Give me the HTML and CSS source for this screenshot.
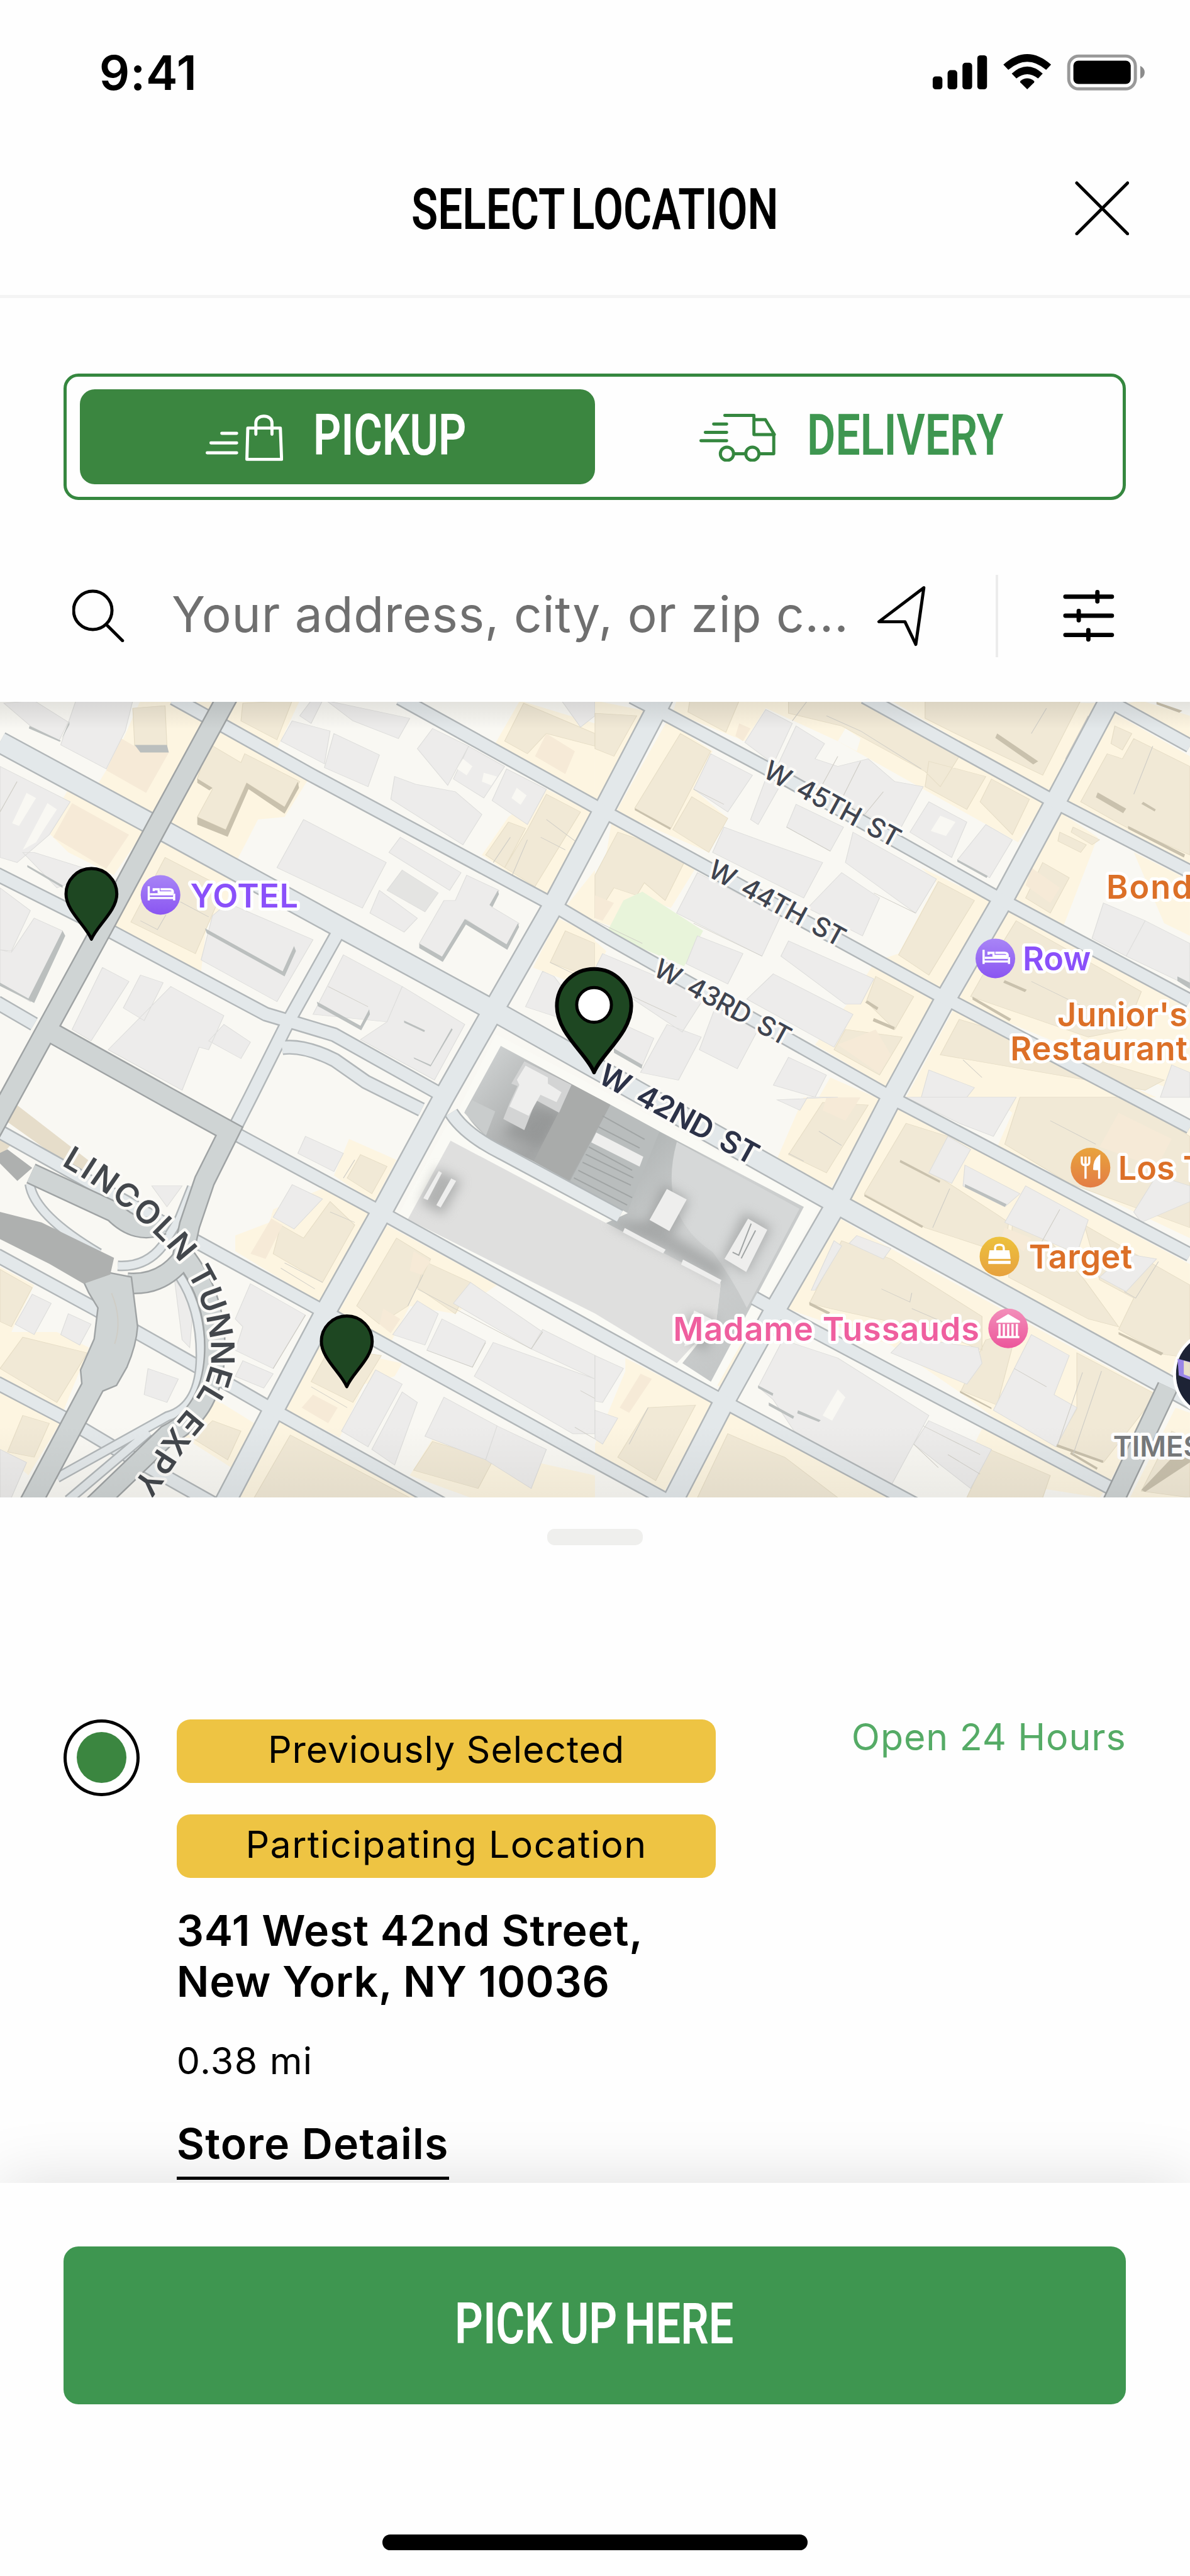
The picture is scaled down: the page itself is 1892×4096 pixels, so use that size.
FILE: index.html
```html
<!DOCTYPE html>
<html lang="en">
<head>
    <meta charset="UTF-8">
    <meta name="viewport" content="width=device-width, initial-scale=1.0">
    <title>Select Location</title>
    <link rel="stylesheet" href="styles.css">
</head>
<body>
    <div class="status-bar">
        <span class="time">9:41</span>
        <svg class="status-icons" viewBox="1500 84 352 68">
            <!-- Signal -->
            <rect x="1505" y="124" width="15.6" height="21" rx="5"/>
            <rect x="1529" y="114" width="15.6" height="31" rx="5"/>
            <rect x="1553" y="102" width="15.6" height="43" rx="5"/>
            <rect x="1577" y="90" width="15.6" height="55" rx="5"/>
            <!-- Wifi -->
            <path d="M1657.5 145l-11-11q-1-1.500 0-2.500 11-8.500 22 0 1 1 0 2.500z"/>
            <path d="M1632.500 119.500q25-23 50 0l-7.500 8q-17.500-14-35 0z"/>
            <path d="M1619 105q38.500-34 77 0l-8 8.500q-30.500-26-61 0z"/>
            <!-- Battery -->
            <rect class="battery-body" x="1724.500" y="91.200" width="107.500" height="53" rx="16"/>
            <rect x="1732" y="98.700" width="92.500" height="37.600" rx="8"/>
            <path class="battery-tip" d="M1840 107q7 3.500 7 10.500t-7 10.500z"/>
        </svg>
    </div>

    <div class="header">
        <svg class="title" viewBox="0 0 588 68"><text class="condensed" x="-2" y="67" textLength="592" lengthAdjust="spacingAndGlyphs">SELECT LOCATION</text></svg>
        <svg class="close" viewBox="0 0 88 88"><path d="M3 3l82 82M85 3L3 85"/></svg>
    </div>

    <div class="toggle">
        <div class="tab active">
            <svg class="tab-icon" viewBox="330 665 126 80">
                <path d="M357 698.500h24M339.500 714h41.500M333.500 730h47.500M399 690h52.500l2 50.500h-56zM412 700v-18c0-15 26-15 26 0v18"/>
            </svg>
            <svg class="tab-label pickup" viewBox="510 666 240 68"><text class="condensed" x="505" y="733.500" textLength="247" lengthAdjust="spacingAndGlyphs">PICKUP</text></svg>
        </div>
        <div class="tab">
            <svg class="tab-icon truck" viewBox="1126 664 126 80">
                <path d="M1169 668.500h47v31h33l-14.500-24h-18.500M1151 682.500h21M1137.500 696h34.500M1130.500 709.500h41.500M1248 698v32.500h-23M1184 730.500h18"/>
                <circle cx="1172.500" cy="730.500" r="10.700"/>
                <circle cx="1213.500" cy="730.500" r="10.700"/>
            </svg>
            <svg class="tab-label delivery" viewBox="1307 666 312 68"><text class="condensed" x="1302" y="733.500" textLength="317" lengthAdjust="spacingAndGlyphs">DELIVERY</text></svg>
        </div>
    </div>

    <div class="search-row">
        <svg class="search-icon" viewBox="117 949 84 86"><circle cx="150" cy="983" r="31"/><path d="M172 1006l26 26"/></svg>
        <span class="placeholder">Your address, city, or zip c...</span>
        <svg class="locate-icon" viewBox="1415 943 82 102"><path d="M1493 948.500l-72.500 55h42l17.500 36.500z"/></svg>
        <span class="separator"></span>
        <svg class="filter-icon" viewBox="1714 948 86 88"><path d="M1719 961h75M1719 991.700h75M1719 1022.700h75M1770.600 953.500v15M1740.500 984v15M1756 1015v15"/></svg>
    </div>

    <svg class="map" viewBox="0 1132 1920 1284">
        <defs>
            <linearGradient id="fadeTop" x1="0" y1="0" x2="0" y2="1">
                <stop offset="0" stop-color="#000" stop-opacity=".09"/>
                <stop offset="1" stop-color="#000" stop-opacity="0"/>
            </linearGradient>
            <linearGradient id="fadeBottom" x1="0" y1="0" x2="0" y2="1">
                <stop offset="0" stop-color="#000" stop-opacity="0"/>
                <stop offset="1" stop-color="#000" stop-opacity=".055"/>
            </linearGradient>
            <linearGradient id="terminal" gradientUnits="userSpaceOnUse" x1="760" y1="1720" x2="1230" y2="2180">
                <stop offset="0" stop-color="#cfd2d2"/>
                <stop offset=".25" stop-color="#a3a5a5"/>
                <stop offset=".45" stop-color="#b4b8b8"/>
                <stop offset=".65" stop-color="#cfd1d1"/>
                <stop offset="1" stop-color="#c3c6c6"/>
            </linearGradient>
            <linearGradient id="purple" x1="0" y1="0" x2="0" y2="1"><stop offset="0" stop-color="#a885f6"/><stop offset="1" stop-color="#8a55f2"/></linearGradient>
            <linearGradient id="orange" x1="0" y1="0" x2="0" y2="1"><stop offset="0" stop-color="#e9a43c"/><stop offset="1" stop-color="#e37c45"/></linearGradient>
            <linearGradient id="gold" x1="0" y1="0" x2="0" y2="1"><stop offset="0" stop-color="#edc23d"/><stop offset="1" stop-color="#e7a13e"/></linearGradient>
            <linearGradient id="pink" x1="0" y1="0" x2="0" y2="1"><stop offset="0" stop-color="#f28fba"/><stop offset="1" stop-color="#ec569b"/></linearGradient>
            <filter id="soft" x="-50%" y="-50%" width="200%" height="200%"><feGaussianBlur stdDeviation="9"/></filter>
            <path id="expyPath" d="M108 1864C186 1908 268 1975 304 2025S354 2122 358 2170S345 2250 308 2294S262 2362 216 2424"/>
            <path id="pin" d="M0 114C-9 92-41 68-41 41A41 41 0 0 1 41 41C41 68 9 92 0 114z"/>
        </defs>
        <rect class="land" x="0" y="1132" width="1920" height="1284"/>

        <!-- North west quarter -->
        <g transform="matrix(.6122 0 0 .4082 0 1130)">
            <path class="zone" d="M370 0H560L535 90L410 455L260 325L310 200zM450 0H545L550 55zM120 510L180 350L380 515L300 690L180 600zM600 0H790L730 190L595 95zM580 125L815 305L750 460L680 470L625 630L445 490zM425 560L610 700L590 860L545 880L530 1070L295 895zM1370 0L1568 90V390L1305 170zM1440 350L1568 440L1440 780L1270 610L1340 460zM1568 670L1485 825L1568 900zM1470 860L1568 930V1150L1405 1055z"/>
            <path class="tan" d="M350 30L435 20L440 180H355zM640 10L770 0L730 155L635 80zM550 170L635 245L645 210L790 320L750 420L650 325L595 510L520 460L560 350L520 310zM435 620L590 740L515 1000L345 875zM1340 480L1385 505L1330 660L1280 610zM1390 510L1440 370L1530 440L1410 735L1330 660zM1490 910L1568 960V1100L1450 1035zM1380 10L1568 130V180L1440 130L1390 210L1330 160z"/>
            <path class="peach" d="M190 405L340 530L280 665L140 540zM445 205L385 365L280 275L320 150L355 180zM1440 130L1515 200L1490 290L1410 220z"/>
            <path class="bldg" d="M10 10L90 0L180 85L155 160L80 100zM200 0H350L330 120L280 270L160 175zM0 260L185 400L130 530L45 640L0 620zM60 600L90 600L260 680L150 740zM0 740L80 830L30 990L0 985zM90 860L165 910L80 1190L0 1120V985L30 995zM800 470L1018 640L955 820L730 660zM1055 540L1215 680L1185 750L1025 600zM1230 690L1315 750L1295 815L1368 880L1335 980L1230 865L1165 1030L1105 960L1170 790L1200 790zM770 80L870 120L855 250L740 160zM880 130L1000 215L970 340L855 265zM860 0L1080 70L1050 150L930 80zM1140 110L1235 180L1180 335L1100 190zM1235 180L1330 260L1275 385L1195 310zM1335 270L1440 350L1390 490L1297 395zM1040 300L1095 330L1200 360L1270 450L1220 570L1030 390zM560 850L600 800L825 945L730 1190L530 1025zM270 1055L340 1110L240 1345L190 1300zM370 1085L430 1115L380 1265L325 1215zM450 1130L590 1245L550 1380L525 1370L480 1540L285 1380zM590 1280L660 1350L635 1415L550 1345zM905 1005L1060 1130L1020 1270L825 1240zM1060 1130L1225 1280L1145 1500L950 1340L1020 1270zM1430 1070L1460 1090L1568 1300L1385 1210zM820 0L850 0L820 90L790 60zM1480 0H1568V60L1530 105z"/>
            <path class="bldg deep" d="M1060 670L1155 760L1120 835L1020 750z"/>
            <path class="bldg" d="M1000 750L1100 860L1065 915L975 840z"/>
            <path class="land" d="M1220 230L1245 260L1230 295L1205 270zM1275 285L1310 300L1295 335L1270 320zM1362 345L1388 375L1372 412L1348 385zM70 365L95 385L50 495L32 485zM125 405L150 430L115 510L95 560L60 590z"/>
            <path class="shade tan-shade" d="M520 460L595 510L650 325L750 420L785 320L788 345L750 447L655 350L600 538L520 490zM520 308L560 345L552 355L520 325z"/>
            <path class="shade" d="M355 175H440L445 205H370zM183 82L160 158L78 100L76 110L158 163L183 95zM165 910L75 1178L0 1115V1128L90 1195L172 930zM540 900L745 1070L775 970L780 990L750 1090L545 920zM1105 960L1165 1012L1225 863L1335 963L1365 880L1368 895L1337 985L1228 885L1167 1033L1105 978zM1312 750L1290 808L1298 816L1315 765zM835 1190L950 1285L973 1220L975 1240L952 1303L838 1208zM1065 1265L1120 1303L1118 1310L1065 1273zM1190 1295L1135 1440L1090 1410L1092 1416L1135 1446L1193 1300zM72 650L165 730L165 740L72 658z"/>
            <path class="edge" d="M370 870L415 905L438 845M475 795L550 855M865 1130L970 1210M1450 1035L1568 1120M45 320L0 440M1345 540L1300 640M1390 550L1350 690M1440 470L1520 560M1425 540L1490 590"/>
        </g>
        <!-- North east quarter -->
        <g transform="matrix(.6122 0 0 .4082 960 1130)">
            <path class="zone" d="M0 0L150 45L15 405L0 395zM190 80L310 200L260 350L350 465L300 600L55 440zM45 470L270 650L200 820L110 770L60 900L0 870zM215 0H760L1185 405L1115 560L640 160L450 30L395 160L205 45zM780 0L1330 10L1200 370zM1370 50L1568 220V650L1245 405zM1385 15L1440 0L1568 60V170zM1225 440L1325 540L1235 890L1100 800zM1420 600L1568 710V930L1500 880zM860 660L1040 790L915 1150L720 1040L800 1000L900 720zM1090 830L1568 1220V1568L955 1190zM730 1050L900 1185L770 1530L580 1360L680 1170zM945 1220L1480 1568H820zM620 1490L740 1568H590zM0 950L30 990L0 1070z"/>
            <path class="tan" d="M225 130L305 200L200 505L105 425zM255 380L350 465L300 600L205 510zM60 520L140 560L235 640L185 790L130 720L110 770L50 740L0 860V690zM250 0H380L345 125L245 45zM510 0H740L960 220L910 340L870 280L650 100L510 50zM880 240L1030 300L980 430L870 340zM1045 310L1145 390L1100 530L1015 400zM870 0H1280L1180 295L950 130L870 70zM1370 100L1415 130L1390 195L1360 170zM1350 210L1390 230L1420 150L1568 260V610L1400 500L1375 480L1280 400zM1180 640L1250 700L1200 840L1135 780zM1260 500L1330 550L1310 570L1255 520zM1225 520L1295 570L1280 600L1220 555zM905 715L1000 790L880 1085L800 1005zM740 1090L840 1170L790 1300L715 1190zM1110 870L1440 1150L1400 1300L1300 1330L990 1170L1020 1090zM960 1260L1500 1500L1450 1540L910 1400zM660 1300L810 1330L750 1480L630 1380zM0 50L110 60L50 220L0 190z"/>
            <path class="peach" d="M1150 660L1225 740L1200 800L1135 730zM380 90L410 110L390 160L370 140zM0 770L50 800L20 870L0 860zM640 1360L740 1300L780 1400L750 1475z"/>
            <path class="park" d="M125 755L285 910L235 1050L30 920L75 790z"/>
            <path class="bldg" d="M450 35L520 90L470 250L395 165zM530 100L605 170L580 230L640 260L720 230L790 320L865 340L800 520L480 260zM305 210L415 295L350 440L260 350zM880 400L980 480L940 620L830 520zM1030 490L1100 550L1040 700L955 630zM530 410L655 500L620 595L505 500zM680 520L900 705L845 840L660 640zM340 500L450 560L600 640L550 780L310 600zM650 680L750 780L705 930L560 820zM270 680L490 850L440 1010L215 840zM270 930L390 1000L350 1120L240 1040zM510 950L735 1100L700 1200L660 1200L490 1010zM470 1080L680 1240L630 1370L400 1180zM20 1000L290 1170L230 1310L90 1170L0 1060zM190 1280L280 1330L220 1500L120 1470zM320 1200L430 1300L375 1455L275 1380zM510 1410L610 1480L580 1568L470 1520zM1340 800L1450 870L1400 1010L1310 940zM1450 870L1568 960V1130L1400 1010zM880 1460L1000 1530L980 1568H860zM1520 1440L1568 1470V1568H1490zM60 1270L155 1335L125 1440L50 1380zM455 290L490 330L430 490L410 470z"/>
            <path class="land" d="M910 455L950 480L925 535L885 515zM660 110L700 150L690 200L640 160z"/>
            <path class="shade tan-shade" d="M1060 130L1168 240L1155 252L1055 147zM1325 363L1400 427L1392 445L1320 382zM1445 400L1478 430L1475 438L1440 408zM105 425L200 503L198 511L105 433zM1405 495L1555 608L1552 620L1405 507zM1080 1105L1138 1143L1133 1152L1076 1115zM995 1170L1097 1258L1092 1267L995 1182zM718 1185L747 1213L743 1224L712 1193zM735 1255L790 1290L788 1302L732 1267zM1480 5L1548 40L1540 48L1480 15z"/>
            <path class="shade" d="M955 628L1035 693L1032 701L955 637zM1535 1090L1568 1115V1140L1535 1108zM50 1375L125 1440L123 1455L50 1392z"/>
            <path class="edge" d="M260 350L340 410M505 500L620 595M735 760L845 840M260 880L440 1010M100 1170L215 1250M125 960L0 870M640 220L600 330M700 240L640 420M760 360L700 470M1150 1110L1300 1220M970 1420L1020 1490M1300 60L1240 230M1190 30L1150 130M1470 180L1420 370M610 60L700 120L860 270M560 0L520 80"/>
        </g>
        <!-- South west quarter -->
        <g transform="matrix(.6122 0 0 .4209 0 1770)">
            <path class="ramp" d="M45 30L240 250L230 285L150 230L15 90zM0 150L30 180L0 230z"/>
            <path class="zone" d="M920 160L1045 240L985 405L880 300zM850 350L980 450L845 790L620 590V530L710 480L720 430zM1020 490L1310 720L1200 830L1080 800L1030 940L890 830zM840 950L1060 1020L1040 1070L960 1100L895 1305L750 1195zM740 1235L1130 1535H625zM0 650L90 720L30 900L150 900L235 960L165 1210L0 1080zM0 1130L160 1245L75 1450L0 1350zM560 1150L670 1250L610 1420L480 1300zM1140 1310L1568 1450V1535H1240L1080 1450z"/>
            <path class="tan" d="M950 220L1020 265L980 370L915 310zM870 400L935 490L850 710L720 600L740 490L800 540zM1045 540L1135 620L1075 800L1000 870L940 800zM1120 630L1240 710L1200 830L1100 730zM870 960L1005 990L930 1170L820 1090zM765 1295L1080 1535H670zM0 660L85 730L30 880L0 860zM60 920L230 980L150 1170L0 1040zM60 1220L130 1250L90 1380L20 1360zM560 1240L635 1280L600 1390L510 1310zM1140 1320L1300 1390L1260 1500L1090 1430z"/>
            <path class="peach" d="M715 465L745 490L700 620L660 600zM1090 590L1135 630L1110 680L1080 665zM1010 810L1055 850L1030 905L1000 870zM825 1140L890 1190L865 1250L795 1190z"/>
            <path class="bldg" d="M805 150L905 215L880 285L785 215zM770 335L850 390L775 505L720 460zM660 715L805 835L720 1040L620 970L640 880L620 850zM640 1010L720 1060L695 1115L620 1070zM1100 780L1155 830L1120 950L1035 910zM1240 710L1430 900L1400 965L1195 790zM1165 850L1280 935L1245 1035L1125 970zM1300 940L1568 1080V1290H1510L1250 1070zM990 1045L1060 1100L970 1340L900 1280zM1060 1130L1100 1170L1040 1410L980 1350zM1170 1150L1310 1260L1280 1390L1120 1300zM1310 1260L1440 1350L1400 1500L1280 1390zM85 755L135 790L90 910L40 870zM180 830L240 870L210 950L160 910zM390 1040L470 1080L440 1170L380 1140zM0 1350L70 1400L30 1535H0zM400 340L480 340L440 420zM1430 890L1568 990V1080L1400 965zM460 700L510 790L500 960L480 930z"/>
            <path class="edge" d="M750 635L850 710M740 655L830 735M1100 735L1400 965L1430 900M1125 970L1245 1035L1280 940M870 440L935 480M1530 1125L1568 1155M720 1040L805 835M1515 1265L1568 1310M1115 680L1075 800M905 310L935 240M820 1110L915 1190"/>
        </g>
        <!-- South east quarter -->
        <g transform="matrix(.6122 0 0 .4209 960 1770)">
            <path class="zone" d="M550 0H755L620 355L480 235zM1050 0H1420L1568 110V540L1060 190L1100 60zM800 40L1568 640V900L1510 1075L665 395zM780 580L1485 1140L1350 1490L1210 1400L960 1130L780 950L505 810L640 460zM1020 1270L1350 1495L1330 1535L960 1450zM355 1210L780 1535H230zM80 1000L310 1170L180 1520L0 1390V1330L80 1050zM1530 1190L1568 1210V1535H1410zM330 820L440 880L330 1110L150 980z"/>
            <path class="tan" d="M600 20L720 30L610 290L510 220zM1120 0H1400L1568 150V500L1250 330L1080 180zM820 100L930 150L890 290L1060 450L1090 480L1080 600L870 500L710 370zM1290 490L1568 720V1000L1495 985L1380 890L1420 770L1330 700zM1100 490L1180 520L1290 700L1380 880L1300 850L1090 690zM650 550L780 620L1020 840V970L900 900L620 810L565 790zM1030 930L1110 900L1060 1180L965 1125zM1270 980L1480 1140L1340 1400L1215 1330L1270 1195zM350 1290L430 1340L500 1380L640 1535H270zM140 1190L265 1180L160 1470L60 1380zM1568 1310L1520 1280L1440 1510L1568 1535zM1040 1350L1200 1450L1180 1535H980z"/>
            <path class="peach" d="M610 0H700L660 90L600 50zM1380 60L1520 160L1480 270L1330 190zM120 1060L150 1080L90 1210L65 1190zM1080 500L1150 540L1130 590L1070 540z"/>
            <path class="bldg" d="M820 0H1110L1050 150L960 100zM930 150L990 200L940 330L880 290zM1135 340L1300 470L1270 600L1080 480zM975 260L1120 370L1080 420L970 340zM1400 600L1480 620L1400 745L1330 690zM1480 300L1568 340V400L1440 480L1420 440zM1150 910L1250 990L1210 1140L1270 1190L1215 1340L1050 1200zM820 920L1010 960L1020 1020L980 1100L780 980zM495 930L640 1000L880 1220L780 1490L525 1280L470 1160L430 1110zM880 1240L1045 1350L990 1500L840 1330zM0 990L75 1040L20 1170L0 1165zM650 570L630 550L570 740L580 740zM690 530L780 580L760 620L670 560zM0 1200L60 1230L20 1330L0 1310zM640 0H560L540 50L480 10z"/>
            <path class="land" d="M640 1120L660 1150L625 1240L600 1220z"/>
            <path class="shade tan-shade" d="M805 240L910 320L908 328L803 249zM710 372L865 493L862 501L710 380zM1380 900L1498 980L1492 990L1380 909zM565 785L620 825L615 833L565 797zM1255 1360L1325 1420L1322 1428L1252 1368zM1218 1330L1340 1393L1338 1402L1216 1340zM1568 1310L1440 1505L1450 1513L1568 1400zM962 1125L1045 1190L1045 1196L962 1133z"/>
            <path class="shade" d="M975 333L1085 410L1080 420L975 345zM535 1200L595 1238L590 1245L533 1212zM458 1170L525 1223L522 1233L458 1182zM430 1105L470 1135L468 1145L430 1115z"/>
            <path class="edge" d="M755 735L830 785L835 750M835 810L985 905M1220 1330L1285 1055M1260 1370L1335 1050M1105 1040L1190 1110M865 1260L1015 1370M930 1370L1015 1445M840 1330L905 1420M590 130L650 185M510 215L550 245M140 1190L90 1330M1200 90L1320 180M935 350L890 500M1225 430L1160 600M1395 745L1425 770L1485 630"/>
        </g>

        <!-- Bus terminal -->
        <path fill="#fafaf5" d="M800 1668L1322 1945L1150 2248L1090 2208L640 1965L718 1820L740 1790z"/>
        <path fill="#dfdfde" d="M727 1840L978 1973L1163 2070L1156 2130L1092 2199L960 2119L658 1967z"/>
        <path fill="url(#terminal)" d="M808 1687L750 1793Q765 1822 800 1843L860 1873L1013 1957L978 1973L1163 2070L1156 2130L1101 2199L1147 2229L1297 1947L1064 1825z"/>
        <path fill="#d6d8d8" d="M1092 1842L1290 1950L1205 2110Q1180 2060 1150 2020Q1060 1960 1092 1842z"/>
        <g filter="url(#soft)" fill="#858787" opacity=".5">
            <path d="M980 1972L1075 2018L1170 2070L1164 2040L1050 1970z"/>
            <path d="M860 1780L905 1800L870 1850L810 1830z"/>
            <path d="M1070 1910L1112 1935L1088 1990L1045 1970z"/>
            <path d="M1200 1955L1245 1980L1205 2055L1165 2030z"/>
            <path d="M705 1885L745 1905L715 1960L678 1940z"/>
            <path d="M1110 2120L1156 2126L1140 2180L1105 2160z"/>
        </g>
        <path fill="#a9abaa" d="M924 1750L985 1782L918 1905L861 1873z"/>
        <path fill="#b9bdbd" d="M985 1782L1064 1825L1012 1956L920 1905z"/>
        <path fill="#c9cccc" d="M762 1775L799 1793L784 1832L749 1795z"/>
        <path class="terminal-line" d="M972 1800L1040 1838M966 1818L1032 1852M950 1850L1020 1888M945 1862L1022 1900M940 1875L1018 1912M933 1888L1020 1932M926 1900L1012 1944"/>
        <path fill="#d3d4d4" d="M846 1712L922 1750L902 1795L865 1775L846 1823L812 1805L822 1780L835 1752L825 1748z"/>
        <path fill="#eeeeed" d="M848 1719L884 1738L884 1748L906 1762L898 1778L872 1766L853 1800L822 1785L838 1750L834 1742zM962 1827L1038 1866L1032 1882L954 1843zM1076 1918L1108 1935L1080 1986L1048 1968zM1207 1966L1238 1984L1204 2052L1169 2031zM1008 1981L1074 2016L1070 2022L1005 1988zM1102 2032L1164 2065L1161 2072L1099 2040zM708 1889L713 1892L690 1936L683 1933zM728 1901L736 1905L711 1948L704 1944zM1120 2114L1148 2128L1140 2160L1104 2172z"/>
        <path class="terminal-line" d="M1212 1974L1192 2025L1182 2020M1219 1985L1196 2030"/>

        <!-- Streets: casing first, surface on top -->
        <g class="casing">
            <path class="wide" d="M0 1197L257 1336L533 1487L796 1630L1340 1936L1884 2235L1930 2260M1070 1124L972 1311L888 1469L790 1640L716 1770L618 1951L526 2115L441 2275L360 2430M1794 1122L1701 1297L1615 1457L1523 1616L1437 1774L1352 1938L1254 2107L1168 2262L1080 2432"/>
            <path d="M280 1126L361 1171L502 1250L888 1457L984 1514L1437 1770L1920 2024M645 1126L984 1314L1517 1606L1920 1818M1020 1124L1070 1150L1235 1238L1609 1448L1920 1614M1395 1124L1701 1293L1920 1406M1795 1134L1920 1203M-5 1410L178 1502L429 1636L539 1669L716 1768M455 1690Q490 1685 540 1710L590 1745L680 1790M728 1795Q750 1830 810 1860L1000 1962M1217 2094L1309 2145L1450 2220L1793 2401M-5 1617L55 1652M380 1829L606 1951L960 2147L1162 2258L1490 2434M-5 1823L306 1997L514 2111L960 2357L1090 2428M-5 2025L153 2111L318 2204L441 2275L720 2430M-5 2231L104 2288L178 2332L345 2426M545 1505L465 1648L404 1770L376 1825"/>
        </g>
        <g class="surface">
            <path class="wide" d="M0 1197L257 1336L533 1487L796 1630L1340 1936L1884 2235L1930 2260M1070 1124L972 1311L888 1469L790 1640L716 1770L618 1951L526 2115L441 2275L360 2430M1794 1122L1701 1297L1615 1457L1523 1616L1437 1774L1352 1938L1254 2107L1168 2262L1080 2432"/>
            <path d="M280 1126L361 1171L502 1250L888 1457L984 1514L1437 1770L1920 2024M645 1126L984 1314L1517 1606L1920 1818M1020 1124L1070 1150L1235 1238L1609 1448L1920 1614M1395 1124L1701 1293L1920 1406M1795 1134L1920 1203M-5 1410L178 1502L429 1636L539 1669L716 1768M455 1690Q490 1685 540 1710L590 1745L680 1790M728 1795Q750 1830 810 1860L1000 1962M1217 2094L1309 2145L1450 2220L1793 2401M-5 1617L55 1652M380 1829L606 1951L960 2147L1162 2258L1490 2434M-5 1823L306 1997L514 2111L960 2357L1090 2428M-5 2025L153 2111L318 2204L441 2275L720 2430M-5 2231L104 2288L178 2332L345 2426M545 1505L465 1648L404 1770L376 1825"/>
        </g>

        <!-- Tunnel approach and dark avenues -->
        <path class="lane-case" d="M48 1910Q55 1960 160 2022M310 1915L290 1965L262 2010Q235 2045 190 2042M288 2056Q325 2110 324 2190T270 2285L92 2384M110 2420L240 2310"/>
        <path class="lane" d="M48 1910Q55 1960 160 2022M310 1915L290 1965L262 2010Q235 2045 190 2042M288 2056Q325 2110 324 2190T270 2285L92 2384M110 2420L240 2310"/>
        <path class="dark-case" d="M368 1122L257 1326L165 1497L73 1665L-20 1835M73 1660L270 1770L370 1825L330 1905L306 1976L294 2031Q260 2075 205 2070M1884 2237L1790 2436M50 1893L184 1955Q220 1992 262 1975M300 2030Q352 2100 346 2190T270 2315L140 2440"/>
        <path class="dark" d="M368 1122L257 1326L165 1497L73 1665L-20 1835M73 1660L270 1770L370 1825L330 1905L306 1976L294 2031Q260 2075 205 2070M1884 2237L1790 2436M50 1893L184 1955Q220 1992 262 1975M300 2030Q352 2100 346 2190T270 2315L140 2440"/>
        <path fill="#cfd4d4" stroke="#9fa3a4" stroke-width="2.500" d="M150 2048L212 2060L222 2140Q220 2170 205 2205L188 2235L166 2244L72 2420H32L132 2232L130 2210L152 2160L158 2110L143 2085L136 2070z"/>
        <path class="edge" d="M180 2086Q198 2130 185 2168"/>
        <path fill="#aeb0af" d="M0 1955L67 1972L184 2029L178 2056L135 2071L80 2039L0 1999zM12 1854L52 1884L28 1905L0 1877V1860z"/>

        <!-- Street names -->
        <g class="street">
            <text transform="translate(1343 1297) rotate(28.500)" y="15" textLength="244">W 45TH ST</text>
            <text transform="translate(1254 1457) rotate(28.500)" y="15" textLength="244">W 44TH ST</text>
            <text transform="translate(1166 1617) rotate(28.500)" y="15" textLength="244">W 43RD ST</text>
            <text class="major" transform="translate(1096 1797) rotate(28.500)" y="18" textLength="285">W 42ND ST</text>
            <text class="expy" dy="18"><textPath href="#expyPath" textLength="688">LINCOLN TUNNEL EXPY</textPath></text>
        </g>

        <!-- Places -->
        <g class="place">
            <text class="hotel" x="307" y="1464" textLength="174">YOTEL</text>
            <text class="hotel" x="1650" y="1565" textLength="110">Row</text>
            <text class="food" x="1785" y="1450" textLength="139">Bond</text>
            <text class="food" x="1706" y="1656" textLength="210">Junior's</text>
            <text class="food" x="1630" y="1710" textLength="286">Restaurant</text>
            <text class="food" x="1804" y="1903">Los T</text>
            <text class="food" x="1660" y="2046" textLength="167">Target</text>
            <text class="museum" x="1086" y="2163.500" textLength="494">Madame Tussauds</text>
            <text class="area" x="1796" y="2350">TIMES SQ</text>
        </g>
        <g class="poi" transform="translate(259 1443.500)"><circle r="32" fill="url(#purple)"/><path d="M-19-14v23M-19 5h41M22-2v11M-11-6v-3h8v6M0-9h15q5 0 5 5h-23M-17-1h37"/></g>
        <g class="poi" transform="translate(1606 1546)"><circle r="32" fill="url(#purple)"/><path d="M-19-14v23M-19 5h41M22-2v11M-11-6v-3h8v6M0-9h15q5 0 5 5h-23M-17-1h37"/></g>
        <g class="poi" transform="translate(1759.500 1883.600)"><circle r="32" fill="url(#orange)"/><path d="M-14-18v9q0 5 6 5t6-5v-9M-8-18v36M14 18v-36q-8 6-8 20h8"/><path class="solid" d="M14-18q-8 6-8 22h8z"/></g>
        <g class="poi" transform="translate(1612.600 2027)"><circle r="32" fill="url(#gold)"/><path d="M-7-9v-5q0-5 7-5t7 5v5"/><path class="solid" d="M-16-10h32l2 14h-36zM-18 7h36v5h-36z"/></g>
        <g class="poi" transform="translate(1626.700 2143)"><circle r="32" fill="url(#pink)"/><path class="solid" d="M0-23l19 11v3h-38v-3z"/><path d="M-14-7v20M-7-7v20M0-7v20M7-7v20M14-7v20M-18 14h36"/></g>
        <circle cx="1965" cy="2217" r="70" fill="#1d2335" stroke="#fff" stroke-width="5"/>
        <path fill="#9b86e8" d="M1900 2192l20 5v29l-18-7z"/>
        <path fill="#e8dfc8" d="M1910 2195l10 3v23l-10-4z"/>

        <!-- Store pins -->
        <use class="pin" href="#pin" x="147.500" y="1401"/>
        <use class="pin" href="#pin" x="559.500" y="2123"/>
        <path class="pin big" d="M958.500 1730C947 1700 898.500 1667 898.500 1623A60 60 0 0 1 1018.500 1623C1018.500 1667 970 1700 958.500 1730z"/>
        <circle class="pin-hole" cx="958.500" cy="1621" r="28"/>

        <rect x="0" y="1132" width="1920" height="44" fill="url(#fadeTop)"/>
        <rect x="0" y="2300" width="1920" height="116" fill="url(#fadeBottom)"/>
    </svg>

    <div class="sheet">
        <div class="handle"></div>
        <div class="store">
            <span class="radio"></span>
            <div class="store-info">
                <span class="badge previously">Previously Selected</span>
                <span class="badge">Participating Location</span>
                <div class="address">341 West 42nd Street,<br>New York, NY 10036</div>
                <div class="distance">0.38 mi</div>
                <a class="details">Store Details</a>
            </div>
            <span class="hours">Open 24 Hours</span>
        </div>
    </div>

    <div class="footer">
        <div class="button">
            <svg class="button-label" viewBox="738 3715 444 68"><text class="condensed" x="734" y="3782" textLength="450" lengthAdjust="spacingAndGlyphs">PICK UP HERE</text></svg>
        </div>
        <div class="home-indicator"></div>
    </div>
</body>
</html>
```
FILE: styles.css
```css
/* 1rem = 10 design units on a 1920 wide screen */
html {
    font-size: 9.854px;
}

body {
    margin: 0;
    width: 192rem;
    height: 415.7rem;
    overflow: hidden;
    background: #fefefe;
    color: #000;
    font-family: Inter, "Liberation Sans", sans-serif;
    display: flex;
    flex-direction: column;
}

svg {
    display: block;
    flex-shrink: 0;
}

.condensed {
    font-family: Roboto, "Liberation Sans", sans-serif;
    font-weight: 600;
    font-size: 93px;
    word-spacing: -8px;
}

/* Status bar */
.status-bar {
    height: 19.6rem;
    display: flex;
    justify-content: space-between;
    align-items: center;
    padding: 3.9rem 6.8rem 0 16rem;
    box-sizing: border-box;
}

.time {
    font-size: 7.7rem;
    font-weight: 600;
    letter-spacing: 0.08rem;
}

.status-icons {
    width: 35.2rem;
    height: 6.8rem;
}

.battery-body {
    fill: none;
    stroke: #999;
    stroke-width: 5;
}

.battery-tip {
    fill: #8c8c8c;
}

/* Header */
.header {
    height: 28rem;
    display: grid;
    grid-template-columns: 1fr auto 1fr;
    align-items: center;
    padding: 0 9.8rem;
    border-bottom: 0.51rem solid #f4f4f4;
}

.title {
    grid-column: 2;
    width: 58.8rem;
    height: 6.8rem;
    overflow: visible;
}

.close {
    width: 8.8rem;
    height: 8.8rem;
    justify-self: end;
    stroke: #000;
    stroke-width: 5;
    stroke-linecap: round;
}

/* Pickup / delivery toggle */
.toggle {
    margin: 12.15rem 10.3rem 0;
    height: 20.45rem;
    box-sizing: border-box;
    border: 0.51rem solid #35873f;
    border-radius: 2.4rem;
    padding: 2.05rem;
    display: flex;
}

.tab {
    width: 83.2rem;
    box-sizing: border-box;
    display: flex;
    align-items: center;
    border-radius: 2.4rem;
    color: #3e9650;
    padding-left: 16.6rem;
}

.tab.active {
    background: #3b8640;
    color: #fff;
    padding-left: 20.2rem;
}

.tab text {
    fill: currentColor;
}

.tab-icon {
    width: 12.6rem;
    height: 8rem;
    margin-top: 0.1rem;
    fill: none;
    stroke: #fff;
    stroke-width: 5;
    stroke-linecap: round;
    stroke-linejoin: round;
}

.tab-icon.truck {
    stroke: #35873f;
}

.tab-label {
    height: 6.8rem;
    margin: -0.8rem 0 0 5.4rem;
    overflow: visible;
}

.pickup {
    width: 24rem;
}

.delivery {
    width: 31.2rem;
    margin-left: 5.5rem;
}

/* Search */
.search-row {
    margin-top: 4.8rem;
    height: 27.7rem;
    padding: 0 12rem 0 11.7rem;
    display: flex;
    align-items: center;
}

.search-icon {
    width: 8.4rem;
    height: 8.6rem;
    fill: none;
    stroke: #000;
    stroke-width: 5;
    stroke-linecap: round;
}

.placeholder {
    width: 113.6rem;
    margin-left: 7.6rem;
    margin-top: -0.6rem;
    font-size: 7.95rem;
    letter-spacing: 0.08rem;
    color: #6f6f6f;
    white-space: nowrap;
}

.locate-icon {
    width: 8.2rem;
    height: 10.2rem;
    fill: none;
    stroke: #000;
    stroke-width: 5;
    stroke-linejoin: round;
}

.separator {
    width: 0.4rem;
    height: 13.3rem;
    background: #ececec;
    margin-left: 11.2rem;
}

.filter-icon {
    width: 8.6rem;
    height: 8.8rem;
    margin-left: auto;
    fill: none;
    stroke: #000;
    stroke-width: 7;
    stroke-linecap: round;
}

/* Map */
.map {
    width: 192rem;
    height: 128.4rem;
    font-family: Inter, "Liberation Sans", sans-serif;
}

.land { fill: #f9f8f3; }
.zone { fill: #fdf5e1; }
.tan { fill: #f1e9d6; stroke: #e6ddc6; stroke-width: 2; }
.peach { fill: #f6ead7; }
.park { fill: #e8f4da; }
.ramp { fill: #e6ddca; }
.bldg { fill: #edeceb; stroke: #dddddb; stroke-width: 2; }
.bldg.deep { fill: #e4e4e2; }
.shade { fill: #bbbfbe; }
.tan-shade { fill: #c9c1ad; }
.edge { fill: none; stroke: #cfcdc6; stroke-width: 2; }

.casing {
    fill: none;
    stroke: #b2b7b9;
    stroke-width: 24;
    stroke-linejoin: round;
}

.casing .wide { stroke-width: 36; }

.surface {
    fill: none;
    stroke: #e3e8ea;
    stroke-width: 19;
    stroke-linejoin: round;
}

.surface .wide { stroke-width: 31; }

.lane-case { fill: none; stroke: #b2b7b9; stroke-width: 17; }
.lane { fill: none; stroke: #e3e8ea; stroke-width: 12; }
.dark-case { fill: none; stroke: #9fa3a4; stroke-width: 35; }
.dark { fill: none; stroke: #cfd4d4; stroke-width: 30; }
.terminal-line { fill: none; stroke: #a0a4a4; stroke-width: 2; }

.street text {
    font-size: 43px;
    font-weight: 500;
    word-spacing: 8px;
    text-anchor: middle;
    fill: #3f4450;
    stroke: #fbfaf7;
    stroke-width: 9;
    stroke-linejoin: round;
    paint-order: stroke;
}

.street .major {
    font-size: 49px;
    font-weight: 600;
    fill: #2c3248;
}

.street .expy {
    font-size: 52px;
    font-weight: 600;
    text-anchor: start;
    word-spacing: 0;
    fill: #43474c;
}

.place text {
    font-size: 53px;
    font-weight: 600;
    stroke: #fff;
    stroke-width: 10;
    stroke-linejoin: round;
    paint-order: stroke;
}

.hotel { fill: #8a50fa; }
.food { fill: #dc7028; }
.museum { fill: #ef5f9f; }
.place .area { fill: #77797b; font-size: 46px; }

.poi path {
    fill: none;
    stroke: #fff;
    stroke-width: 3.5;
}

.poi .solid { fill: #fff; stroke: none; }

.pin {
    fill: #1e4722;
    stroke: #000;
    stroke-width: 5;
    stroke-linejoin: round;
}

.pin.big { stroke-width: 6; }
.pin-hole { fill: #fff; stroke: #000; stroke-width: 5; }

/* Bottom sheet */
.sheet {
    height: 110.6rem;
}

.handle {
    width: 15.4rem;
    height: 2.6rem;
    margin: 5.1rem auto 0;
    border-radius: 1.2rem;
    background: #efefed;
}

.store {
    margin-top: 28.1rem;
    padding: 0 10.3rem;
    display: flex;
    align-items: flex-start;
}

.radio {
    width: 12.2rem;
    height: 12.4rem;
    box-sizing: border-box;
    border: 0.51rem solid #000;
    border-radius: 50%;
    display: flex;
}

.radio::before {
    content: "";
    flex: 1;
    margin: 1.55rem;
    border-radius: 50%;
    background: #3b8640;
}

.store-info {
    width: 87rem;
    margin-left: 6rem;
    display: flex;
    flex-direction: column;
    align-items: flex-start;
}

.badge {
    width: 100%;
    height: 10.25rem;
    margin-bottom: 5.15rem;
    border-radius: 2.2rem;
    background: #eec443;
    text-align: center;
    font-size: 6rem;
    line-height: 9.8rem;
    letter-spacing: 0.14rem;
}

.badge.previously {
    letter-spacing: 0.09rem;
}

.address {
    margin-top: -0.8rem;
    font-size: 6.9rem;
    font-weight: 600;
    line-height: 8.2rem;
    letter-spacing: 0.08rem;
    white-space: nowrap;
}

.distance {
    margin-top: 5.2rem;
    font-size: 6rem;
    line-height: 7rem;
    letter-spacing: 0.14rem;
}

.details {
    margin-top: 5.9rem;
    padding-bottom: 1.3rem;
    border-bottom: 0.55rem solid #000;
    font-size: 6.9rem;
    font-weight: 600;
    line-height: 8rem;
    letter-spacing: 0.12rem;
}

.hours {
    margin-left: auto;
    font-size: 6rem;
    line-height: 5.6rem;
    letter-spacing: 0.09rem;
    color: #55ab66;
}

/* Footer */
.footer {
    flex: 1;
    position: relative;
    background: #fefefe;
    box-shadow: 0 0 10rem rgba(0, 0, 0, 0.13);
    display: flex;
    flex-direction: column;
    align-items: center;
}

.button {
    width: 171.4rem;
    height: 25.5rem;
    margin-top: 10.3rem;
    border-radius: 2.4rem;
    background: #3e9650;
    display: flex;
    justify-content: center;
    align-items: center;
}

.button-label {
    width: 44.4rem;
    height: 6.8rem;
    margin-top: -0.8rem;
    fill: #fff;
    overflow: visible;
}

.home-indicator {
    width: 68.6rem;
    height: 2.5rem;
    margin-top: 21rem;
    border-radius: 1.25rem;
    background: #000;
}
```
